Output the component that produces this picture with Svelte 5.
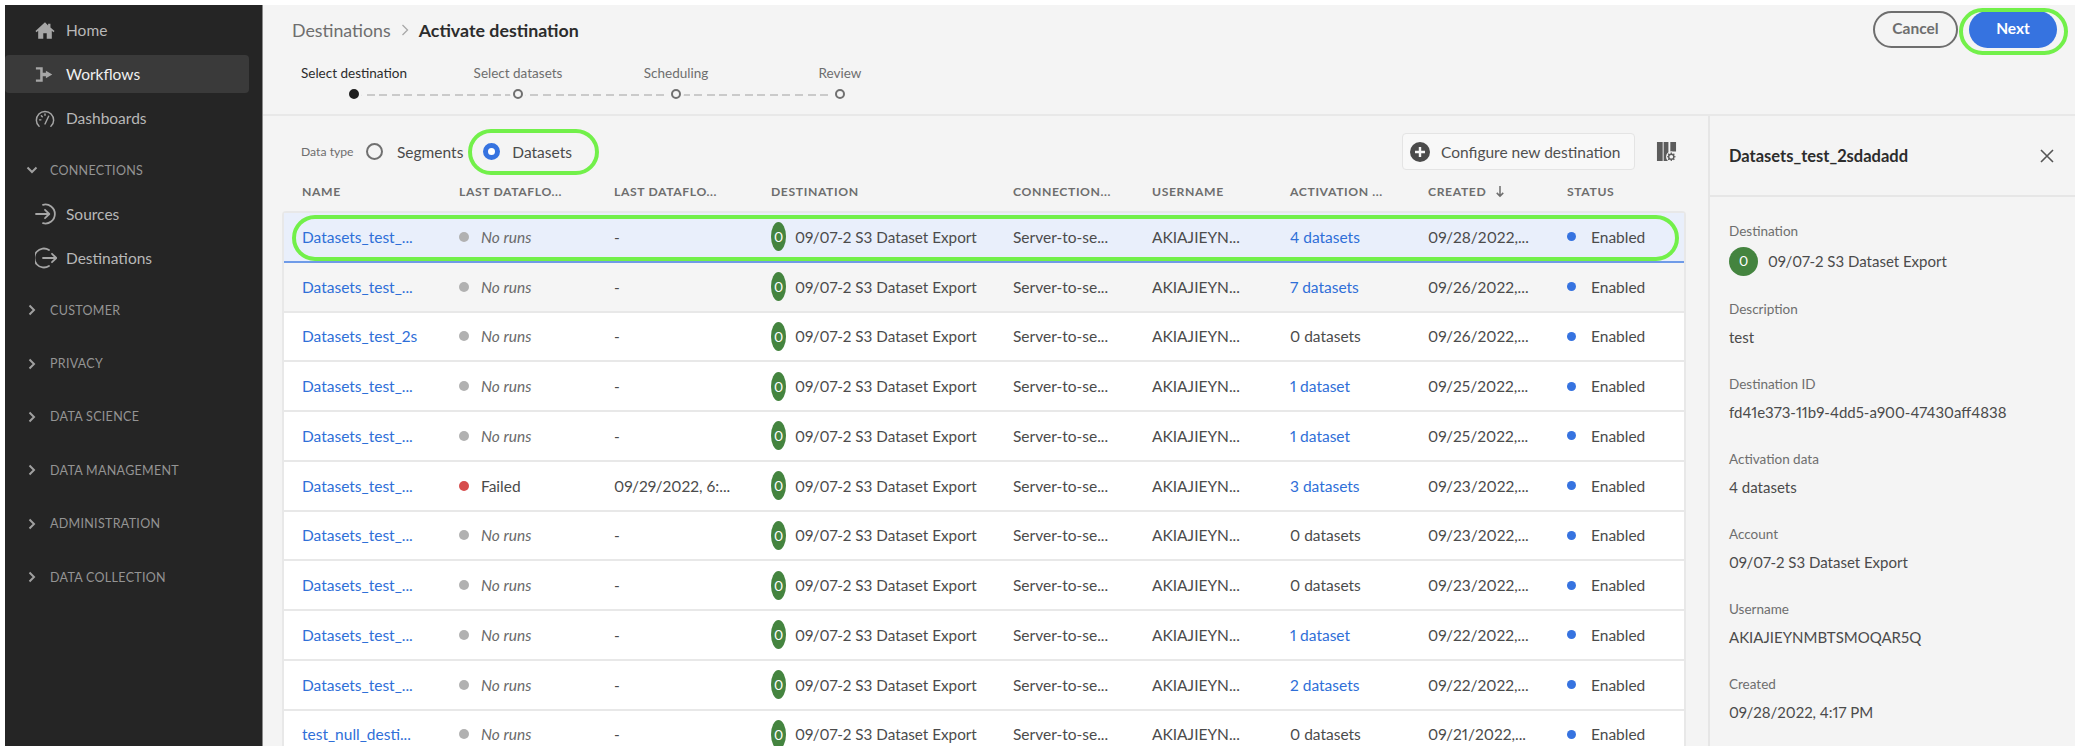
<script>
  const nav = [
    { label: 'CUSTOMER' },
    { label: 'PRIVACY' },
    { label: 'DATA SCIENCE' },
    { label: 'DATA MANAGEMENT' },
    { label: 'ADMINISTRATION' },
    { label: 'DATA COLLECTION' },
  ]

  const steps = [
    { label: 'Select destination', width: 164, active: true },
    { label: 'Select datasets', width: 164 },
    { label: 'Scheduling', width: 152 },
    { label: 'Review', width: 176 },
  ]

  const columns = ['Name', 'Last dataflo...', 'Last dataflo...', 'Destination', 'Connection...', 'Username', 'Activation ...', 'Created', 'Status']

  const rows = [
    { name: 'Datasets_test_...', count: '4 datasets', link: true, created: '09/28/2022,...' },
    { name: 'Datasets_test_...', count: '7 datasets', link: true, created: '09/26/2022,...' },
    { name: 'Datasets_test_2s', count: '0 datasets', created: '09/26/2022,...' },
    { name: 'Datasets_test_...', count: '1 dataset', link: true, created: '09/25/2022,...' },
    { name: 'Datasets_test_...', count: '1 dataset', link: true, created: '09/25/2022,...' },
    { name: 'Datasets_test_...', count: '3 datasets', link: true, created: '09/23/2022,...', failed: true },
    { name: 'Datasets_test_...', count: '0 datasets', created: '09/23/2022,...' },
    { name: 'Datasets_test_...', count: '0 datasets', created: '09/23/2022,...' },
    { name: 'Datasets_test_...', count: '1 dataset', link: true, created: '09/22/2022,...' },
    { name: 'Datasets_test_...', count: '2 datasets', link: true, created: '09/22/2022,...' },
    { name: 'test_null_desti...', count: '0 datasets', created: '09/21/2022,...' },
  ]

  const details = [
    { label: 'Description', value: 'test' },
    { label: 'Destination ID', value: 'fd41e373-11b9-4dd5-a900-47430aff4838' },
    { label: 'Activation data', value: '4 datasets' },
    { label: 'Account', value: '09/07-2 S3 Dataset Export' },
    { label: 'Username', value: 'AKIAJIEYNMBTSMOQAR5Q' },
    { label: 'Created', value: '09/28/2022, 4:17 PM' },
  ]
</script>

<div class="page">
  <aside class="sidebar">
    <a class="item">
      <svg viewBox="0 0 22 20" class="nav-icon"><path fill="currentColor" d="M11 1 0.5 10.5l1.2 1.3L3.5 10.2V19h5.6v-6h3.8v6h5.6v-8.8l1.8 1.6 1.2-1.3L17 6.8V2.5h-2.6v1.9z" /></svg>
      Home
    </a>
    <a class="item selected">
      <svg viewBox="0 0 22 20" class="nav-icon"><path fill="currentColor" d="M1 2h7.5v6H12V5.800l7 4.200-7 4.200V12H8.500v6H1v-2.600h4.700V4.600H1z" /></svg>
      Workflows
    </a>
    <a class="item">
      <svg viewBox="0 0 22 20" class="nav-icon"><g fill="none" stroke="currentColor" stroke-width="1.600" stroke-linecap="round"><path d="M4.500 18.500C2.500 16.800 1.500 14.500 1.500 12 1.500 6.500 5.700 2.200 11 2.200S20.500 6.500 20.500 12c0 2.500-1 4.800-3 6.500" /><path d="M11 16 15 7.500M5 11.500H6.500M7 7l1 1M11 5v1.500" /></g></svg>
      Dashboards
    </a>

    <div class="group open">
      <svg viewBox="0 0 12 12" class="chevron"><path d="M1.500 3.500 6 8l4.500-4.500" /></svg>
      CONNECTIONS
    </div>
    <a class="item">
      <svg viewBox="0 0 22 22" class="nav-icon big"><g fill="none" stroke="currentColor" stroke-width="1.800" stroke-linecap="round" stroke-linejoin="round"><path d="M1 11h13M10 6.800 14.300 11 10 15.200" /><path d="M8 1.800A9.500 9.500 0 1 1 8 20.200" /></g></svg>
      Sources
    </a>
    <a class="item">
      <svg viewBox="0 0 22 22" class="nav-icon big"><g fill="none" stroke="currentColor" stroke-width="1.800" stroke-linecap="round" stroke-linejoin="round"><path d="M8 11h13M17 6.800 21.300 11 17 15.200" /><path d="M14 3A9.500 9.500 0 1 0 14 19" /></g></svg>
      Destinations
    </a>

    {#each nav as n}
      <div class="group">
        <svg viewBox="0 0 12 12" class="chevron"><path d="M3.500 1.500 8 6l-4.500 4.500" /></svg>
        {n.label}
      </div>
    {/each}
  </aside>

  <main class="main">
    <header class="header">
      <div>
        <div class="crumbs">
          <span class="crumb">Destinations</span>
          <svg viewBox="0 0 8 12" class="crumb-sep"><path d="M1.500 1 6.500 6l-5 5" /></svg>
          <span class="crumb-current">Activate destination</span>
        </div>
        <div class="stepper">
          <div class="track"></div>
          {#each steps as s}
            <div class="step" class:active={s.active} style="width: {s.width}px">
              <span class="step-label">{s.label}</span>
              <span class="dot"></span>
            </div>
          {/each}
        </div>
      </div>
      <div class="actions">
        <button class="btn cancel">Cancel</button>
        <button class="btn next">Next</button>
      </div>
    </header>

    <div class="body">
      <section class="content">
        <div class="toolbar">
          <span class="type-label">Data type</span>
          <span class="radio"></span>
          <span class="radio-text segments">Segments</span>
          <span class="radio on"></span>
          <span class="radio-text">Datasets</span>
          <button class="configure">
            <svg viewBox="0 0 20 20" class="plus"><circle cx="10" cy="10" r="10" fill="#4b4b4b" /><path d="M10 5v10M5 10h10" stroke="#f7f7f7" stroke-width="2.400" /></svg>
            Configure new destination
          </button>
          <svg viewBox="0 0 22 22" class="col-settings">
            <path fill="#5c5c5c" d="M1 1h6v20H1zM8 1h5v20H8zM15 1h6v10h-6z" />
            <circle cx="16" cy="16.500" r="5.500" fill="#f4f4f4" />
            <circle cx="16" cy="16.500" r="2.700" fill="none" stroke="#5c5c5c" stroke-width="1.500" />
            <path d="M16 12v1.800M16 19.200V21M11.500 16.500h1.800M18.700 16.500h1.800M12.800 13.300l1.300 1.300M17.900 18.400l1.300 1.300M19.200 13.300l-1.300 1.300M14.100 18.400l-1.300 1.300" stroke="#5c5c5c" stroke-width="1.300" />
          </svg>
        </div>

        <div class="table-head row-grid">
          {#each columns as c}
            <div class="th">
              {c}
              {#if c === 'Created'}
                <svg viewBox="0 0 10 14" class="sort"><path d="M5 1v11M1.500 8.500 5 12l3.500-3.500" /></svg>
              {/if}
            </div>
          {/each}
        </div>

        <div class="table">
          {#each rows as r, i}
            <div class="row row-grid" class:picked={i === 0} class:hovered={i === 1}>
              <a class="link">{r.name}</a>
              <div class="run">
                <span class="status-dot" class:red={r.failed}></span>
                {#if r.failed}Failed{:else}<em>No runs</em>{/if}
              </div>
              <div>{r.failed ? '09/29/2022, 6:...' : '-'}</div>
              <div class="dest">
                <span class="dest-logo">0</span>
                09/07-2 S3 Dataset Export
              </div>
              <div>Server-to-se...</div>
              <div>AKIAJIEYN...</div>
              <div class:link={r.link}>{r.count}</div>
              <div>{r.created}</div>
              <div class="enabled"><span class="blue-dot"></span>Enabled</div>
            </div>
          {/each}
        </div>
      </section>

      <aside class="panel">
        <div class="panel-head">
          <span class="panel-title">Datasets_test_2sdadadd</span>
          <svg viewBox="0 0 14 14" class="close"><path d="M1 1l12 12M13 1 1 13" /></svg>
        </div>
        <div class="panel-body">
          <div class="field">
            <div class="field-label">Destination</div>
            <div class="field-value with-logo"><span class="panel-logo">0</span>09/07-2 S3 Dataset Export</div>
          </div>
          {#each details as d}
            <div class="field">
              <div class="field-label">{d.label}</div>
              <div class="field-value">{d.value}</div>
            </div>
          {/each}
        </div>
      </aside>
    </div>
  </main>

  <!-- green call-outs drawn over the screen -->
  <div class="ring ring-row"></div>
  <div class="ring ring-radio"></div>
  <div class="ring ring-next"></div>
</div>

<style>
  :global(body) {
    margin: 0;
    background: #fff;
  }

  .page {
    position: relative;
    display: flex;
    width: 2096px;
    height: 746px;
    padding: 5px 21px 0 5px;
    box-sizing: border-box;
    overflow: hidden;
    font-family: Lato, "Open Sans", sans-serif;
    font-size: 15.5px;
    font-variant-numeric: proportional-nums;
    color: #4b4b4b;
  }

  .sidebar {
    flex: none;
    width: 258px;
    padding-top: 6px;
    box-sizing: border-box;
    background: #252525;
    border-right: 1px solid #8a8a8a;
    color: #b8b8b8;
    font-size: 15.5px;
  }

  .item {
    display: flex;
    align-items: center;
    width: 244px;
    height: 38px;
    margin-bottom: 6px;
    padding-left: 30px;
    box-sizing: border-box;
    border-radius: 4px;
  }

  .item.selected {
    background: #3a3a3a;
    color: #f0f0f0;
  }

  .nav-icon {
    flex: none;
    width: 20px;
    height: 19px;
    margin-right: 11px;
    color: #a6a6a6;
  }

  .nav-icon.big {
    width: 22px;
    height: 22px;
    margin-right: 9px;
  }

  .group {
    display: flex;
    align-items: center;
    height: 53.4px;
    padding: 1px 0 0 21px;
    box-sizing: border-box;
    color: #949494;
    font-size: 12.5px;
    letter-spacing: 0.3px;
  }

  .group.open {
    margin-bottom: -1.400px;
  }

  .chevron {
    width: 12px;
    height: 12px;
    margin-right: 12px;
    fill: none;
    stroke: #a0a0a0;
    stroke-width: 2;
  }

  .main {
    flex: 1;
    display: flex;
    flex-direction: column;
    min-width: 0;
    background: #f4f4f4;
  }

  .header {
    flex: none;
    display: flex;
    justify-content: space-between;
    height: 111px;
    box-sizing: border-box;
    border-bottom: 2px solid #e8e8e8;
  }

  .crumbs {
    display: flex;
    align-items: center;
    height: 50px;
    padding-left: 29px;
    font-size: 17.8px;
  }

  .crumb {
    color: #6e6e6e;
  }

  .crumb-sep {
    width: 8px;
    height: 12px;
    margin: 0 10px 0 10px;
    fill: none;
    stroke: #a8a8a8;
    stroke-width: 1.300;
  }

  .crumb-current {
    font-weight: 700;
    color: #2c2c2c;
  }

  .stepper {
    position: relative;
    display: flex;
    margin-left: 9px;
    padding-top: 9px;
  }

  .track {
    position: absolute;
    left: 82px;
    right: 88px;
    top: 39px;
    height: 2px;
    background: repeating-linear-gradient(90deg, #cacaca 0 8px, transparent 8px 12.600px);
  }

  .step {
    position: relative;
    display: flex;
    flex-direction: column;
    align-items: center;
    gap: 7px;
  }

  .step-label {
    font-size: 13.500px;
    line-height: 18px;
    color: #6e6e6e;
  }

  .step.active .step-label {
    color: #2c2c2c;
  }

  .dot {
    width: 10px;
    height: 10px;
    box-sizing: border-box;
    border: 2.500px solid #707070;
    border-radius: 50%;
    background: #f4f4f4;
    box-shadow: 0 0 0 3px #f4f4f4;
  }

  .step.active .dot {
    background: #1f1f1f;
    border-color: #1f1f1f;
  }

  .actions {
    display: flex;
    gap: 11px;
    padding: 6px 18px 0 0;
  }

  .btn {
    height: 37px;
    padding: 0 0 3px;
    border-radius: 19px;
    font: 700 15.500px Lato, sans-serif;
  }

  .cancel {
    width: 85px;
    background: transparent;
    border: 2px solid #6e6e6e;
    color: #6e6e6e;
  }

  .next {
    width: 88px;
    background: #3673e0;
    border: 0;
    color: #fff;
  }

  .body {
    flex: 1;
    display: flex;
    min-height: 0;
  }

  .content {
    flex: 1;
    min-width: 0;
    padding: 17px 22px 0 19px;
  }

  .toolbar {
    display: flex;
    align-items: center;
    height: 37px;
    padding-left: 19px;
  }

  .type-label {
    width: 65px;
    font-size: 12.2px;
    color: #6e6e6e;
  }

  .radio {
    width: 17px;
    height: 17px;
    box-sizing: border-box;
    margin-right: 14px;
    border: 2px solid #707070;
    border-radius: 50%;
  }

  .radio.on {
    margin-right: 12px;
    border: 5.500px solid #3673e0;
    background: #fff;
  }

  .radio-text {
    color: #4b4b4b;
  }

  .segments {
    margin-right: 20px;
  }

  .configure {
    display: flex;
    align-items: center;
    gap: 11px;
    width: 233px;
    height: 37px;
    margin-left: auto;
    padding: 0 0 0 7px;
    box-sizing: border-box;
    background: #f8f8f8;
    border: 1.500px solid #e4e4e4;
    border-radius: 4px;
    color: #505050;
    font: 15.500px Lato, sans-serif;
    white-space: nowrap;
  }

  .plus {
    flex: none;
    width: 20px;
    height: 20px;
  }

  .col-settings {
    flex: none;
    width: 21px;
    height: 21px;
    margin: 0 9px 0 21px;
  }

  .row-grid {
    display: grid;
    grid-template-columns: 157px 155px 157px 242px 139px 138px 138px 139px 1fr;
    align-items: center;
    padding-left: 20px;
  }

  .table-head {
    height: 40px;
    margin-top: 1px;
  }

  .th {
    display: flex;
    align-items: center;
    gap: 9px;
    color: #6e6e6e;
    font-size: 12.2px;
    font-weight: 700;
    letter-spacing: 0.600px;
    text-transform: uppercase;
  }

  .sort {
    width: 10px;
    height: 13px;
    fill: none;
    stroke: #6e6e6e;
    stroke-width: 1.600;
  }

  .table {
    background: #fff;
    border: 2px solid #e8e8e8;
    border-bottom: 0;
    border-radius: 4px 4px 0 0;
    margin-top: 0;
  }

  .row {
    height: 49.750px;
    margin-bottom: 0;
    padding-left: 18px;
    box-sizing: border-box;
    border-bottom: 2px solid #e8e8e8;
    white-space: nowrap;
  }

  .row.picked {
    background: #e9effb;
    border-bottom-color: #6f9be8;
  }

  .row.hovered {
    background: #f5f5f5;
  }

  .link {
    color: #2f6fd8;
  }

  .run {
    display: flex;
    align-items: center;
  }

  .run em {
    color: #6a6a6a;
  }

  .status-dot {
    width: 10px;
    height: 10px;
    margin-right: 12px;
    border-radius: 50%;
    background: #b1b1b1;
  }

  .status-dot.red {
    background: #d64c4c;
  }

  .dest {
    display: flex;
    align-items: center;
    font-size: 15.25px;
  }

  .dest-logo {
    flex: none;
    display: flex;
    align-items: center;
    justify-content: center;
    width: 15px;
    height: 29px;
    margin: 0 9px 0 0;
    border-radius: 50%;
    background: #44843f;
    color: #fff;
    font-size: 14px;
  }

  .enabled {
    display: flex;
    align-items: center;
  }

  .blue-dot {
    width: 9px;
    height: 9px;
    margin: 0 15px 0 0;
    border-radius: 50%;
    background: #3673e0;
  }

  .panel {
    flex: none;
    width: 367px;
    box-sizing: border-box;
    border-left: 2px solid #e6e6e6;
    font-size: 15px;
  }

  .panel-head {
    display: flex;
    align-items: center;
    justify-content: space-between;
    height: 81px;
    padding: 0 21px 0 19px;
    box-sizing: border-box;
    border-bottom: 2px solid #e6e6e6;
  }

  .panel-title {
    font-size: 16.5px;
    font-weight: 700;
    color: #2c2c2c;
  }

  .close {
    width: 14px;
    height: 14px;
    fill: none;
    stroke: #555;
    stroke-width: 1.600;
  }

  .panel-body {
    padding: 24px 19px 0;
  }

  .field {
    height: 75px;
  }

  .field:first-child {
    height: 78px;
  }

  .field-label {
    height: 20px;
    line-height: 20px;
    font-size: 13.5px;
    color: #6e6e6e;
  }

  .field-value {
    margin-top: 8px;
    line-height: 20px;
  }

  .field-value.with-logo {
    display: flex;
    align-items: center;
    margin-top: 0;
    height: 40px;
  }

  .panel-logo {
    display: flex;
    align-items: center;
    justify-content: center;
    width: 29px;
    height: 29px;
    margin-right: 10px;
    border-radius: 50%;
    background: #44843f;
    color: #fff;
    font-size: 14px;
  }

  .ring {
    position: absolute;
    box-sizing: border-box;
    border: 4px solid #72f04a;
    pointer-events: none;
  }

  .ring-row {
    left: 292px;
    top: 215px;
    width: 1387px;
    height: 46px;
    border-radius: 23px;
  }

  .ring-radio {
    left: 468px;
    top: 129px;
    width: 131px;
    height: 46px;
    border-radius: 23px;
  }

  .ring-next {
    left: 1959px;
    top: 8px;
    width: 109px;
    height: 47px;
    border-radius: 24px;
  }
</style>
